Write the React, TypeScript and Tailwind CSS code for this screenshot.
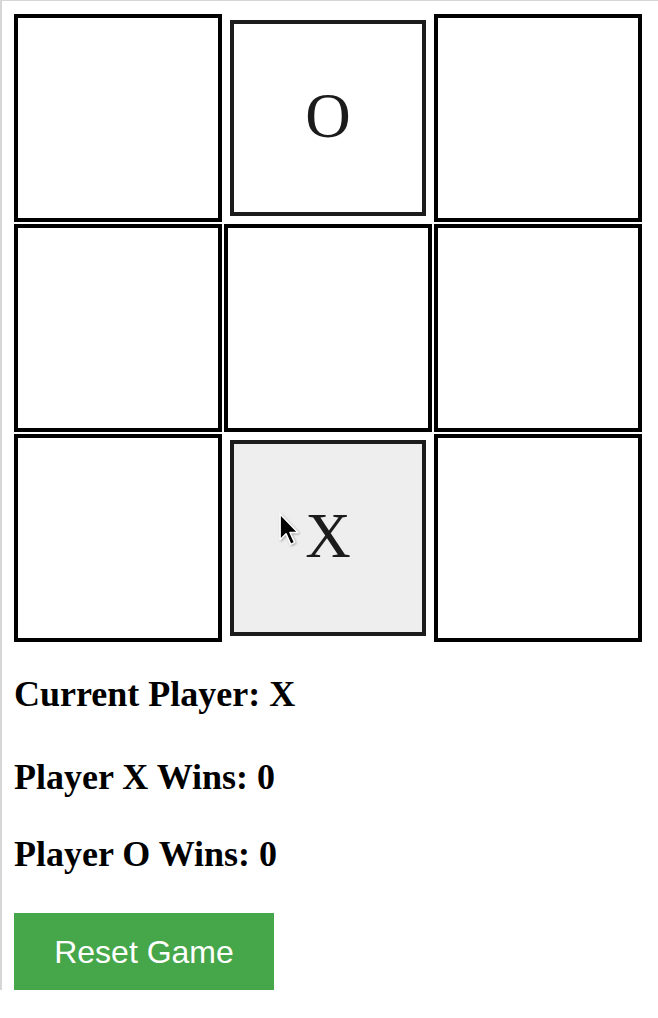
const board: (string | null)[] = [null, "O", null, null, null, null, null, "X", null];

function Cell({ value, hover }: { value: string | null; hover?: boolean }) {
	if (!value) {
		return <div className="w-[208px] h-[208px] border-4 border-black bg-white" />;
	}
	return (
		<div className="w-[208px] h-[208px] flex items-center justify-center">
			<div
				className={`relative w-[196px] h-[196px] border-4 border-[#1c1c1c] flex items-center justify-center text-[63px] leading-none text-[#1c1c1c] ${hover ? "bg-[#eeeeee]" : "bg-white"}`}
			>
				<span className="pb-[4px]">{value}</span>
				{hover && (
					<svg className="absolute left-[44px] top-[68px] drop-shadow-[1px_1px_1px_rgba(0,0,0,0.3)]" width="24" height="37" viewBox="0 0 18 28">
						<path d="M1.5 1.5 L1.5 21 L6 16.5 L9.5 24.5 L12.5 23 L9 15.5 L15 15.5 Z" fill="#000" stroke="#fff" strokeWidth="1.2" strokeLinejoin="round" />
					</svg>
				)}
			</div>
		</div>
	);
}

export default function App() {
	return (
		<div className="h-[990px] w-[658px] border-l-2 border-t border-[#d6d6d6] bg-white font-['Liberation_Serif',serif] text-black">
			<div className="pl-[12px] pt-[13px]">
				<div className="grid grid-cols-[208px_208px_208px] gap-[2px] w-fit">
					{board.map((v, i) => (
						<Cell key={i} value={v} hover={i === 7} />
					))}
				</div>

				<h2 className="mt-[34px] text-[36px] font-bold leading-none">Current Player: X</h2>
				<p className="mt-[47px] text-[36px] font-bold leading-none">Player X Wins: 0</p>
				<p className="mt-[41px] text-[36px] font-bold leading-none">Player O Wins: 0</p>

				<button className="mt-[41px] w-[260px] h-[77px] bg-[#46a64a] text-white text-[32px] font-['Liberation_Sans',sans-serif]">
					Reset Game
				</button>
			</div>
		</div>
	);
}
